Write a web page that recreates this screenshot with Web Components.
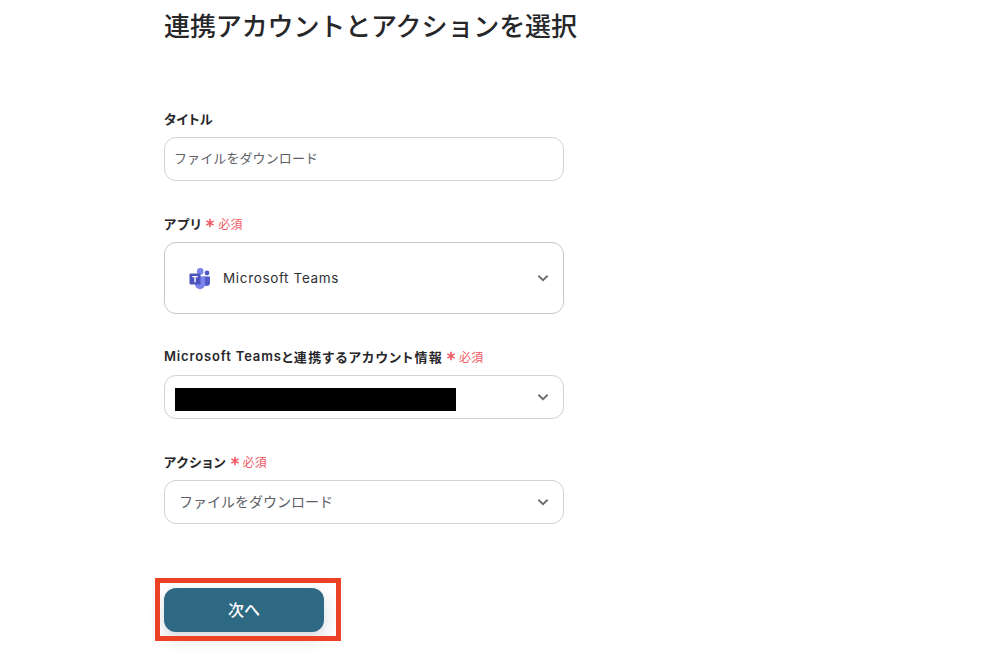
<!DOCTYPE html>
<html lang="ja">
<head>
<meta charset="utf-8">
<title>連携アカウントとアクションを選択</title>
<style>
  html, body { margin: 0; background: #fff; }
  body {
    font-family: Inter, "Noto Sans CJK JP", sans-serif;
    color: #27272a;
    height: 666px;
    overflow: hidden;
  }
</style>
</head>
<body>
<flow-page>
  <h-title slot="title">連携アカウントとアクションを選択</h-title>
  <form-field label="タイトル" style="margin-top:62px;--label-spacing:.5px">
    <text-box value="ファイルをダウンロード"></text-box>
  </form-field>
  <form-field label="アプリ" required style="margin-top:32px">
    <select-box tall pad="22">
      <teams-icon></teams-icon>
      <span style="letter-spacing:.65px;color:#2f3034">Microsoft Teams</span>
    </select-box>
  </form-field>
  <form-field label="Microsoft Teamsと連携するアカウント情報" required style="margin-top:32px;--label-spacing:1.3px">
    <select-box pad="10"><mask-bar></mask-bar></select-box>
  </form-field>
  <form-field label="アクション" required style="margin-top:32px">
    <select-box pad="14"><span style="font-size:14px;color:#5d6066;padding-bottom:2px">ファイルをダウンロード</span></select-box>
  </form-field>
  <next-button style="margin-top:64px">次へ</next-button>
</flow-page>

<script>
class FlowPage extends HTMLElement {
  constructor() {
    super();
    this.attachShadow({mode: 'open'}).innerHTML = `<style>
      :host { display: flex; flex-direction: column; align-items: flex-start; padding: 8px 0 0 164px; width: 400px; }
    </style>
    <slot name="title"></slot><slot></slot>`;
  }
}

class HTitle extends HTMLElement {
  constructor() {
    super();
    this.attachShadow({mode: 'open'}).innerHTML = `<style>
      :host { display: block; font-size: 26px; line-height: 38px; font-weight: 500; letter-spacing: -.12px; color: #27272a; white-space: nowrap; }
    </style>
    <slot></slot>`;
  }
}

class FormField extends HTMLElement {
  constructor() {
    super();
    // latin runs in the label are set on their own spacing
    const label = this.getAttribute('label').replace(/[A-Za-z ]+/g, m => `<span class="latin">${m}</span>`);
    const req = this.hasAttribute('required')
      ? `<span class="req"><svg width="10" height="10" viewBox="0 0 10 10"><path d="M5 .8v8.4M1.4 2.9l7.2 4.2M8.6 2.9 1.4 7.1" stroke="#ef5a64" stroke-width="1.6" fill="none"/></svg>必須</span>`
      : '';
    this.attachShadow({mode: 'open'}).innerHTML = `<style>
      :host { display: block; width: 400px; }
      .label { display: flex; align-items: center; height: 20px; margin-bottom: 9px; font-size: 13px; font-weight: 600; color: #27272a; white-space: nowrap; font-feature-settings: "palt"; letter-spacing: var(--label-spacing, 1px); }
      .latin { letter-spacing: .85px; white-space: pre; }
      .req { display: inline-flex; align-items: center; gap: 3px; margin-left: 3px; font-size: 12px; font-weight: 400; letter-spacing: .3px; color: #ef5a64; font-feature-settings: normal; }
    </style>
    <div class="label">${label}${req}</div>
    <slot></slot>`;
  }
}

class TextBox extends HTMLElement {
  constructor() {
    super();
    this.attachShadow({mode: 'open'}).innerHTML = `<style>
      :host { display: flex; align-items: center; box-sizing: border-box; height: 44px; padding: 0 9px 3px; border: 1px solid #cdd2d8; border-radius: 12px; font-size: 13px; letter-spacing: .1px; color: #5d6066; background: #fff; }
    </style>
    <span>${this.getAttribute('value')}</span>`;
  }
}

class SelectBox extends HTMLElement {
  constructor() {
    super();
    const tall = this.hasAttribute('tall');
    this.attachShadow({mode: 'open'}).innerHTML = `<style>
      :host { display: flex; align-items: center; box-sizing: border-box; height: ${tall ? 72 : 44}px; padding: 0 13px 0 ${this.getAttribute('pad')}px; border: 1px solid ${tall ? '#c9c9c9' : '#cdd2d8'}; border-radius: 12px; font-size: 13.5px; background: #fff; }
      .content { flex: 1; display: flex; align-items: center; gap: 12px; }
      svg { display: block; }
    </style>
    <div class="content"><slot></slot></div>
    <svg width="14" height="14" viewBox="0 0 14 14"><path d="M2.4 4.8 7 9.2l4.6-4.4" fill="none" stroke="#6b6d70" stroke-width="1.9"/></svg>`;
  }
}

class MaskBar extends HTMLElement {
  constructor() {
    super();
    this.attachShadow({mode: 'open'}).innerHTML = `<style>
      :host { display: block; width: 281px; height: 23px; margin-top: 4px; background: #000; }
    </style>`;
  }
}

class TeamsIcon extends HTMLElement {
  constructor() {
    super();
    this.attachShadow({mode: 'open'}).innerHTML = `<style>
      :host { display: block; width: 24px; height: 24px; }
      svg { display: block; }
    </style>
    <svg width="24" height="24" viewBox="0 0 24 24">
      <circle cx="20" cy="7" r="2.4" fill="#5059c9"/>
      <path d="M16 10.4h7v6.2a3.5 3.5 0 0 1-7 0z" fill="#5059c9"/>
      <circle cx="13.2" cy="5.4" r="3.3" fill="#7b83eb"/>
      <path d="M8 10.2h10v8a5 5 0 0 1-10 0z" fill="#7b83eb"/>
      <rect x="2.5" y="7.4" width="11" height="11" rx="1.2" fill="#4b53bc"/>
      <path d="M5.3 10h5.4v1.3H8.7v5H7.3v-5h-2z" fill="#fff"/>
    </svg>`;
  }
}

class NextButton extends HTMLElement {
  constructor() {
    super();
    this.attachShadow({mode: 'open'}).innerHTML = `<style>
      :host { display: block; position: relative; width: 160px; height: 44px; }
      button { display: block; width: 100%; height: 100%; padding: 0 0 2px; border: 0; border-radius: 12px; background: #2e6983; color: #fff; font: 500 16px Inter, "Noto Sans CJK JP", sans-serif; box-shadow: 0 6px 16px rgba(30, 60, 80, .2); }
      .mark { position: absolute; left: -9px; top: -10px; width: 176px; height: 53px; border: 5px solid #ec4124; pointer-events: none; }
    </style>
    <button type="button"><slot></slot></button>
    <div class="mark"></div>`;
  }
}

customElements.define('flow-page', FlowPage);
customElements.define('h-title', HTitle);
customElements.define('form-field', FormField);
customElements.define('text-box', TextBox);
customElements.define('select-box', SelectBox);
customElements.define('mask-bar', MaskBar);
customElements.define('teams-icon', TeamsIcon);
customElements.define('next-button', NextButton);
</script>
</body>
</html>
